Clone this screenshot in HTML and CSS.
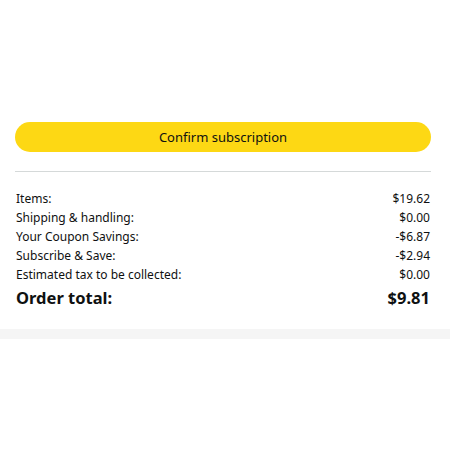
FILE: index.html
```html
<!DOCTYPE html>
<html>
<head>
<meta charset="utf-8">
<link rel="stylesheet" href="styles.css">
</head>
<body>
<div class="page">
  <div class="panel">
    <button class="confirm">Confirm subscription</button>
    <hr class="divider">
    <div class="summary">
      <div class="row"><span>Items:</span><span>$19.62</span></div>
      <div class="row"><span>Shipping &amp; handling:</span><span>$0.00</span></div>
      <div class="row"><span>Your Coupon Savings:</span><span>-$6.87</span></div>
      <div class="row"><span>Subscribe &amp; Save:</span><span>-$2.94</span></div>
      <div class="row"><span>Estimated tax to be collected:</span><span>$0.00</span></div>
      <div class="row total"><span>Order total:</span><span>$9.81</span></div>
    </div>
  </div>
  <div class="band"></div>
</div>
</body>
</html>
```

FILE: styles.css
```css
html, body {
  margin: 0;
  padding: 0;
  background: #ffffff;
}
.page {
  font-family: "Noto Sans", "Open Sans", sans-serif;
  color: #0f1111;
  width: 450px;
  height: 450px;
  display: flex;
  flex-direction: column;
}
.panel {
  padding: 122px 19px 17px 15px;
  display: flex;
  flex-direction: column;
}
.confirm {
  height: 30px;
  border: none;
  border-radius: 15px;
  background: #fdd814;
  font-family: inherit;
  font-size: 13px;
  color: #0f1111;
  padding: 0;
}
.divider {
  border: none;
  border-top: 1px solid #d5d9d9;
  margin: 19px 0 17px 0;
  height: 0;
}
.summary {
  display: flex;
  flex-direction: column;
  padding: 0 1px 0 1px;
}
.row {
  display: flex;
  justify-content: space-between;
  font-size: 12px;
  line-height: 19px;
}
.total {
  font-size: 16.5px;
  font-weight: bold;
  line-height: 28px;
}
.band {
  height: 10px;
  background: #f5f5f5;
}
```
